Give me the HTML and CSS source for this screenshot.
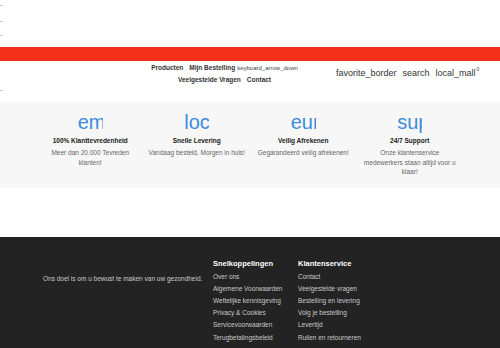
FILE: index.html
```html
<!DOCTYPE html>
<html lang="nl">

<head>
    <meta charset="UTF-8" />
    <title>Winkel</title>
    <link rel="stylesheet" href="styles.css">
</head>

<body>
    <div class="top">
        <span class="mark m1"></span>
        <span class="mark m2"></span>
        <span class="mark m3"></span>
    </div>
    <div class="redbar"></div>
    <div class="mainbar">
        <div class="edge"><span class="mark"></span></div>
        <ul class="nav">
            <li><a href="#">Producten</a></li>
            <li><a href="#">Mijn Bestelling</a><span class="caret">keyboard_arrow_down</span></li>
            <li><a href="#">Veelgestelde Vragen</a></li>
            <li><a href="#">Contact</a></li>
        </ul>
        <div class="tools">
            <span>favorite_border</span>
            <span>search</span>
            <span class="cart">local_mall<sup>0</sup></span>
        </div>
    </div>

    <div class="usp">
        <div class="usp-inner">
            <div class="usp-item">
                <div class="icon">email</div>
                <h4>100% Klanttevredenheid</h4>
                <p>Meer dan 20.000 Tevreden klanten!</p>
            </div>
            <div class="usp-item">
                <div class="icon">local_shipping</div>
                <h4>Snelle Levering</h4>
                <p>Vandaag besteld, Morgen in huis!</p>
            </div>
            <div class="usp-item">
                <div class="icon">euro</div>
                <h4>Veilig Afrekenen</h4>
                <p>Gegarandeerd veilig afrekenen!</p>
            </div>
            <div class="usp-item">
                <div class="icon">support_agent</div>
                <h4>24/7 Support</h4>
                <p>Onze klantenservice medewerkers staan altijd voor u klaar!</p>
            </div>
        </div>
    </div>

    <div class="footer">
        <div class="about">
            <p>Ons doel is om u bewust te maken van uw gezondheid.</p>
        </div>
        <div class="links">
            <h5>Snelkoppelingen</h5>
            <a href="#">Over ons</a>
            <a href="#">Algemene Voorwaarden</a>
            <a href="#">Wettelijke kennisgeving</a>
            <a href="#">Privacy &amp; Cookies</a>
            <a href="#">Servicevoorwaarden</a>
            <a href="#">Terugbetalingsbeleid</a>
        </div>
        <div class="links">
            <h5>Klantenservice</h5>
            <a href="#">Contact</a>
            <a href="#">Veelgestelde vragen</a>
            <a href="#">Bestelling en levering</a>
            <a href="#">Volg je bestelling</a>
            <a href="#">Levertijd</a>
            <a href="#">Ruilen en retourneren</a>
        </div>
    </div>
</body>

</html>
```

FILE: styles.css
```css
* {
    margin: 0;
    padding: 0;
}

body {
    font-family: "Liberation Sans", Arial, sans-serif;
    color: #222;
    background: #fff;
}

a {
    color: inherit;
    text-decoration: none;
}

.top {
    height: 42px;
    padding-top: 5px;
}

.mark {
    display: block;
    width: 3px;
    height: 1px;
    background: #c8c8c8;
}

.m2 {
    margin-top: 15px;
}

.m3 {
    margin-top: 13px;
}

.redbar {
    height: 14px;
    background: #f2301a;
}

.mainbar {
    height: 41px;
    display: flex;
    align-items: flex-start;
}

.edge {
    width: 3px;
    padding-top: 29px;
}

.nav {
    list-style: none;
    width: 153px;
    margin-left: 145px;
    padding-top: 1px;
    display: flex;
    flex-wrap: wrap;
    justify-content: center;
    column-gap: 6px;
    font-size: 6.5px;
    font-weight: bold;
    line-height: 12px;
    color: #333;
}

.caret {
    font-size: 6px;
    font-weight: normal;
    margin-left: 2px;
    color: #444;
}

.tools {
    margin-left: 35px;
    margin-top: 6px;
    display: flex;
    gap: 6px;
    font-size: 9px;
    line-height: 12px;
    color: #333;
}

.cart sup {
    font-size: 5px;
    line-height: 0;
    vertical-align: 5px;
    margin-left: 1px;
}

.usp {
    background: #f7f7f7;
    padding: 8px 0 11px;
}

.usp-inner {
    width: 426px;
    margin: 0 auto;
    display: grid;
    grid-template-columns: repeat(4, 1fr);
}

.usp-item {
    padding: 0 4px;
    text-align: center;
}

.icon {
    width: 25px;
    height: 24px;
    margin: 0 auto;
    overflow: hidden;
    white-space: nowrap;
    text-align: left;
    font-size: 20px;
    line-height: 24px;
    color: #3d8ddb;
}

.usp-item h4 {
    margin-top: 2px;
    font-size: 6.5px;
    line-height: 10px;
    color: #222;
}

.usp-item p {
    margin-top: 2px;
    font-size: 6.5px;
    line-height: 9.5px;
    color: #666;
}

.footer {
    margin-top: 49px;
    background: #232323;
    height: 90px;
    padding: 21px 0 0 43px;
    display: flex;
    align-items: flex-start;
    color: #c9c9c9;
}

.about {
    width: 170px;
    padding-top: 16px;
    font-size: 6.5px;
    line-height: 10px;
}

.links {
    width: 85px;
    font-size: 6.5px;
}

.links h5 {
    font-size: 7.5px;
    line-height: 12px;
    color: #fff;
    margin-bottom: 1px;
}

.links a {
    display: block;
    line-height: 12.2px;
}
```
